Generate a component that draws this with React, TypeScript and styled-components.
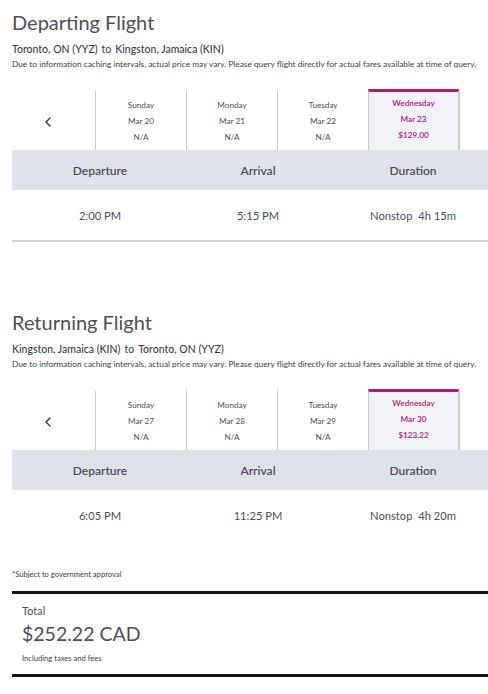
import React from 'react';
import styled, { createGlobalStyle } from 'styled-components';
import { ChevronLeft } from 'lucide-react';

const GlobalStyle = createGlobalStyle`
  html, body {
    margin: 0;
    padding: 0;
    background: #fff;
    overflow: hidden;
  }
  body {
    font-family: Lato, 'Open Sans', sans-serif;
    color: #4b4f58;
  }
`;

const Page = styled.div`
  width: 476px;
  padding: 0 0 0 12px;
`;

const Section = styled.section<{ last?: boolean }>`
  padding-top: 8px;
  height: ${({ last }) => (last ? 'auto' : '300px')};
  box-sizing: border-box;
`;

const Title = styled.h2`
  margin: 0;
  font-size: 20px;
  line-height: 28px;
  font-weight: 400;
  color: #4b4f58;
`;

const Route = styled.div`
  margin-top: 6px;
  font-size: 10.5px;
  line-height: 14px;
  color: #3a3e46;
`;

const City = styled.span`
  font-weight: 500;
`;

const To = styled.span`
  margin: 0 4px;
`;

const Note = styled.div`
  margin-top: 2px;
  font-size: 8.3px;
  line-height: 12px;
  color: #3a3e46;
  white-space: nowrap;
`;

const Strip = styled.div`
  margin-top: 18px;
  display: flex;
  height: 62px;
  width: 540px;
`;

const Arrow = styled.div`
  flex: none;
  width: 83px;
  display: flex;
  align-items: center;
  justify-content: center;
  padding: 6px 12px 0 0;
  box-sizing: border-box;
  color: #333;
`;

const Day = styled.div<{ active?: boolean }>`
  width: 91px;
  flex: none;
  box-sizing: border-box;
  margin-top: 1px;
  border-left: 1px solid #c9ccd1;
  border-right: ${({ active }) => (active ? '1px solid #c9ccd1' : 'none')};
  border-top: 3px solid ${({ active }) => (active ? '#b7177a' : 'transparent')};
  background: ${({ active }) => (active ? '#f2f3f6' : '#fff')};
  color: ${({ active }) => (active ? '#b7177a' : '#4b4f58')};
  text-align: center;
  font-size: 8.2px;
  line-height: 16px;
  padding-top: ${({ active }) => (active ? '3px' : '5px')};
  font-weight: ${({ active }) => (active ? 600 : 400)};
`;

const Table = styled.div`
  width: 486px;
`;

const Row = styled.div<{ head?: boolean; ruled?: boolean }>`
  display: grid;
  grid-template-columns: 176px 140px 170px;
  height: ${({ head }) => (head ? '40px' : '50px')};
  align-items: center;
  background: ${({ head }) => (head ? '#dfe3e9' : '#fff')};
  border-bottom: ${({ ruled }) => (ruled ? '2px solid #d3d5d8' : 'none')};
  font-size: ${({ head }) => (head ? '12px' : '11.2px')};
  font-weight: ${({ head }) => (head ? 600 : 400)};
  color: #4b4f58;
`;

const Cell = styled.div`
  text-align: center;
  white-space: pre;
`;

const Footnote = styled.div`
  margin-top: 28px;
  font-size: 7.6px;
  line-height: 12px;
  color: #3a3e46;
`;

const Summary = styled.div`
  margin-top: 11px;
  border-top: 3px solid #141414;
  border-bottom: 3px solid #141414;
  padding: 9px 10px 10px;
`;

const TotalLabel = styled.div`
  font-size: 11px;
  line-height: 16px;
  color: #4b4f58;
`;

const Amount = styled.div`
  font-size: 19.5px;
  line-height: 30px;
  font-weight: 400;
  color: #4b4f58;
`;

const Small = styled.div`
  margin-top: 3px;
  font-size: 7.6px;
  line-height: 12px;
  color: #3a3e46;
`;

interface DayInfo {
  name: string;
  date: string;
  price: string;
  active?: boolean;
}

interface FlightProps {
  title: string;
  from: string;
  to: string;
  days: DayInfo[];
  times: [string, string, string];
  ruled?: boolean;
  last?: boolean;
}

const NOTE =
  'Due to information caching intervals, actual price may vary. Please query flight directly for actual fares available at time of query.';

function Flight({ title, from, to, days, times, ruled, last }: FlightProps) {
  return (
    <Section last={last}>
      <Title>{title}</Title>
      <Route>
        <City>{from}</City>
        <To>to</To>
        <City>{to}</City>
      </Route>
      <Note>{NOTE}</Note>
      <Strip>
        <Arrow>
          <ChevronLeft size={16} strokeWidth={2} />
        </Arrow>
        {days.map((d) => (
          <Day key={d.date} active={d.active}>
            <div>{d.name}</div>
            <div>{d.date}</div>
            <div>{d.price}</div>
          </Day>
        ))}
        <Day>
          <div>Thursday</div>
        </Day>
      </Strip>
      <Table>
        <Row head>
          <Cell>Departure</Cell>
          <Cell>Arrival</Cell>
          <Cell>Duration</Cell>
        </Row>
        <Row ruled={ruled}>
          <Cell>{times[0]}</Cell>
          <Cell>{times[1]}</Cell>
          <Cell>{times[2]}</Cell>
        </Row>
      </Table>
    </Section>
  );
}

export default function App() {
  return (
    <>
      <GlobalStyle />
      <Page>
        <Flight
          title="Departing Flight"
          from="Toronto, ON (YYZ)"
          to="Kingston, Jamaica (KIN)"
          days={[
            { name: 'Sunday', date: 'Mar 20', price: 'N/A' },
            { name: 'Monday', date: 'Mar 21', price: 'N/A' },
            { name: 'Tuesday', date: 'Mar 22', price: 'N/A' },
            { name: 'Wednesday', date: 'Mar 23', price: '$129.00', active: true },
          ]}
          times={['2:00 PM', '5:15 PM', 'Nonstop  4h 15m']}
          ruled
        />
        <Flight
          title="Returning Flight"
          from="Kingston, Jamaica (KIN)"
          to="Toronto, ON (YYZ)"
          days={[
            { name: 'Sunday', date: 'Mar 27', price: 'N/A' },
            { name: 'Monday', date: 'Mar 28', price: 'N/A' },
            { name: 'Tuesday', date: 'Mar 29', price: 'N/A' },
            { name: 'Wednesday', date: 'Mar 30', price: '$123.22', active: true },
          ]}
          times={['6:05 PM', '11:25 PM', 'Nonstop  4h 20m']}
          last
        />
        <Footnote>*Subject to government approval</Footnote>
        <Summary>
          <TotalLabel>Total</TotalLabel>
          <Amount>$252.22 CAD</Amount>
          <Small>Including taxes and fees</Small>
        </Summary>
      </Page>
    </>
  );
}
